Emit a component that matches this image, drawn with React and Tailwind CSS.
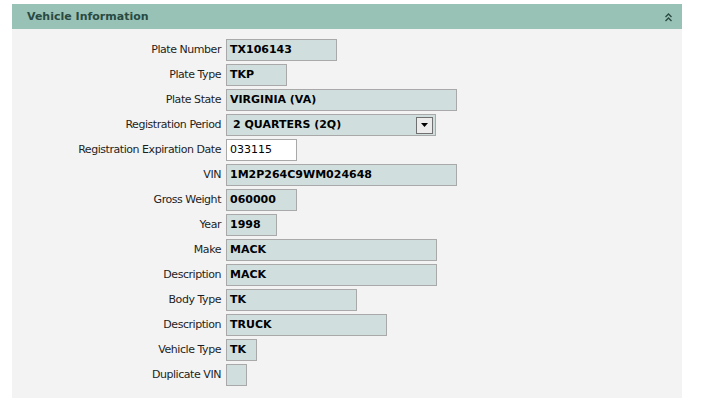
import React from "react";

const rows = [
  { label: "Plate Number", value: "TX106143", w: "w-[111px]" },
  { label: "Plate Type", value: "TKP", w: "w-[61px]" },
  { label: "Plate State", value: "VIRGINIA (VA)", w: "w-[231px]" },
  { label: "Registration Period", value: "2 QUARTERS (2Q)", w: "w-[210px]", select: true },
  { label: "Registration Expiration Date", value: "033115", w: "w-[71px]", editable: true },
  { label: "VIN", value: "1M2P264C9WM024648", w: "w-[231px]" },
  { label: "Gross Weight", value: "060000", w: "w-[71px]" },
  { label: "Year", value: "1998", w: "w-[51px]" },
  { label: "Make", value: "MACK", w: "w-[211px]" },
  { label: "Description", value: "MACK", w: "w-[211px]" },
  { label: "Body Type", value: "TK", w: "w-[131px]" },
  { label: "Description", value: "TRUCK", w: "w-[161px]" },
  { label: "Vehicle Type", value: "TK", w: "w-[31px]" },
  { label: "Duplicate VIN", value: "", w: "w-[21px]" },
];

const Field = ({ row }) => {
  if (row.editable) {
    return (
      <div className={`${row.w} h-[22px] border border-[#a9a9a9] bg-white pl-[3px] flex items-center text-[11px] text-black`}>
        {row.value}
      </div>
    );
  }
  if (row.select) {
    return (
      <div className={`${row.w} h-[22px] border border-[#a9a9a9] bg-[#d0dfde] flex items-center justify-between pl-[6px] pr-[2px]`}>
        <span className="text-[11px] font-bold text-black">{row.value}</span>
        <span className="w-[17px] h-[17px] border border-[#707070] bg-[#ececec] flex items-center justify-center">
          <svg width="7" height="4" viewBox="0 0 7 4">
            <path d="M0 0h7L3.5 4z" fill="#000" />
          </svg>
        </span>
      </div>
    );
  }
  return (
    <div className={`${row.w} h-[22px] border border-[#a9a9a9] bg-[#d0dfde] pl-[3px] flex items-center text-[11px] font-bold text-black`}>
      {row.value}
    </div>
  );
};

const App = () => {
  return (
    <div className="w-[711px] h-[419px] bg-white pt-[4px] pl-[12px]" style={{ fontFamily: '"DejaVu Sans", Verdana, sans-serif' }}>
      <div className="w-[670px] bg-[#f3f3f3]">
        <div className="h-[25px] bg-[#98c2b6] flex items-center justify-between pl-[15px] pr-[10px] pt-[2px]">
          <span className="text-[11px] font-bold text-[#294a42]">Vehicle Information</span>
          <svg width="7" height="9" viewBox="0 0 7 9" fill="none" stroke="#2c4a43" strokeWidth="1.4">
            <path d="M0.5 4l3-3 3 3M0.5 8l3-3 3 3" />
          </svg>
        </div>
        <div className="pt-[10px] pb-[12px] flex flex-col gap-[3px]">
          {rows.map((row, i) => (
            <div key={i} className="flex items-center h-[22px]">
              <div className="w-[214px] pr-[5px] text-right text-[11px] text-[#1e1e1e] tracking-[-0.45px] whitespace-nowrap">
                {row.label}
              </div>
              <Field row={row} />
            </div>
          ))}
        </div>
      </div>
    </div>
  );
};

export default App;
